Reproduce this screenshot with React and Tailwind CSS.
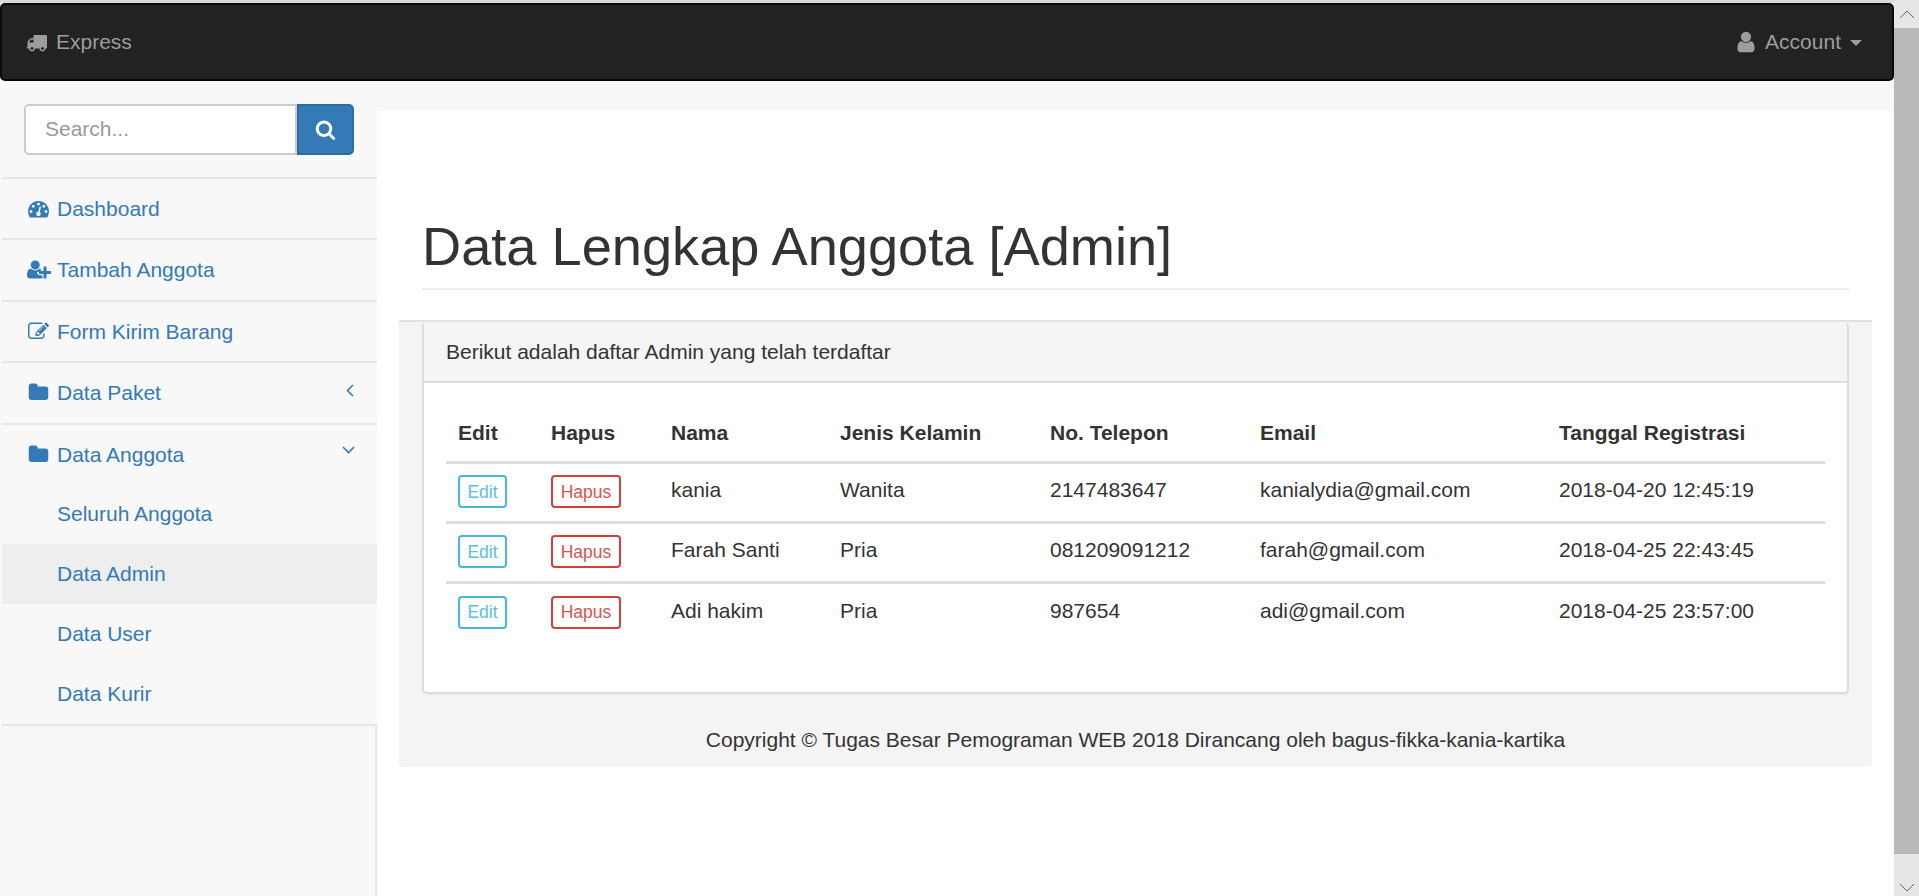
const rows = [
  { nama: "kania", jk: "Wanita", telp: "2147483647", email: "kanialydia@gmail.com", tgl: "2018-04-20 12:45:19" },
  { nama: "Farah Santi", jk: "Pria", telp: "081209091212", email: "farah@gmail.com", tgl: "2018-04-25 22:43:45" },
  { nama: "Adi hakim", jk: "Pria", telp: "987654", email: "adi@gmail.com", tgl: "2018-04-25 23:57:00" },
];

const headers = [
  ["Edit", "w-[93px]"],
  ["Hapus", "w-[120px]"],
  ["Nama", "w-[169px]"],
  ["Jenis Kelamin", "w-[210px]"],
  ["No. Telepon", "w-[210px]"],
  ["Email", "w-[299px]"],
  ["Tanggal Registrasi", ""],
];

// font awesome 4 glyphs
const glyphs = {
  truck: "M640 1408q0-52-38-90t-90-38-90 38-38 90 38 90 90 38 90-38 38-90zm-384-512h384v-256h-158q-13 0-22 9l-195 195q-9 9-9 22v30zm1280 512q0-52-38-90t-90-38-90 38-38 90 38 90 90 38 90-38 38-90zm256-1088v1024q0 15-4 26.5t-13.5 18.5-16.5 11.5-23.5 6-22.5 2-25.5 0-22.5-.5q0 106-75 181t-181 75-181-75-75-181h-384q0 106-75 181t-181 75-181-75-75-181h-64q-3 0-22.5.5t-25.5 0-22.5-2-23.5-6-16.5-11.5-13.5-18.5-4-26.5q0-26 19-45t45-19v-320q0-8-.5-35t0-38 2.5-34.5 6.5-37 14-30.5 22.5-30l198-198q19-19 50.5-32t58.5-13h160v-192q0-26 19-45t45-19h1024q26 0 45 19t19 45z",
  user: "M1536 1399q0 109-62.5 187t-150.5 78h-854q-88 0-150.5-78t-62.5-187q0-85 8.5-160.5t31.5-152 58.5-131 94-89 134.5-34.5q131 128 313 128t313-128q76 0 134.5 34.5t94 89 58.5 131 31.5 152 8.5 160.5zm-256-887q0 159-112.5 271.5t-271.5 112.5-271.5-112.5-112.5-271.5 112.5-271.5 271.5-112.5 271.5 112.5 112.5 271.5z",
  search: "M1216 832q0-185-131.5-316.5t-316.5-131.5-316.5 131.5-131.5 316.5 131.5 316.5 316.5 131.5 316.5-131.5 131.5-316.5zm512 832q0 52-38 90t-90 38q-54 0-90-38l-343-342q-179 124-399 124-143 0-273.5-55.5t-225-150-150-225-55.5-273.5 55.5-273.5 150-225 225-150 273.5-55.5 273.5 55.5 225 150 150 225 55.5 273.5q0 220-124 399l343 343q37 37 37 90z",
  dashboard: "M384 1152q0-53-37.5-90.5t-90.5-37.5-90.5 37.5-37.5 90.5 37.5 90.5 90.5 37.5 90.5-37.5 37.5-90.5zm192-448q0-53-37.5-90.5t-90.5-37.5-90.5 37.5-37.5 90.5 37.5 90.5 90.5 37.5 90.5-37.5 37.5-90.5zm428 481l101-382q6-26-7.5-48.5t-38.5-29.5-48 6.5-30 39.5l-101 382q-60 5-107 43.5t-63 98.5q-20 77 20 146t117 89 146-20 89-117q16-60-6-117t-72-91zm660-33q0-53-37.5-90.5t-90.5-37.5-90.5 37.5-37.5 90.5 37.5 90.5 90.5 37.5 90.5-37.5 37.5-90.5zm-640-640q0-53-37.5-90.5t-90.5-37.5-90.5 37.5-37.5 90.5 37.5 90.5 90.5 37.5 90.5-37.5 37.5-90.5zm448 192q0-53-37.5-90.5t-90.5-37.5-90.5 37.5-37.5 90.5 37.5 90.5 90.5 37.5 90.5-37.5 37.5-90.5zm320 448q0 261-141 483-19 29-54 29h-1402q-35 0-54-29-141-221-141-483 0-182 71-348t191-286 286-191 348-71 348 71 286 191 191 286 71 348z",
  userPlus: "M704 896q-159 0-271.5-112.5t-112.5-271.5 112.5-271.5 271.5-112.5 271.5 112.5 112.5 271.5-112.5 271.5-271.5 112.5zm960 128h352q13 0 22.5 9.5t9.5 22.5v192q0 13-9.5 22.5t-22.5 9.5h-352v352q0 13-9.5 22.5t-22.5 9.5h-192q-13 0-22.5-9.5t-9.5-22.5v-352h-352q-13 0-22.5-9.5t-9.5-22.5v-192q0-13 9.5-22.5t22.5-9.5h352v-352q0-13 9.5-22.5t22.5-9.5h192q13 0 22.5 9.5t9.5 22.5v352zm-736 224q0 52 38 90t90 38h256v238q-68 50-171 50h-874q-121 0-194-69t-73-190q0-53 3.5-103.5t14-109 26.5-108.5 43-97.5 62-81 85.5-53.5 111.5-20q19 0 39 17 79 61 154.5 91.5t164.5 30.5 164.5-30.5 154.5-91.5q20-17 39-17 65 0 121 30v226h-224q-52 0-90 38t-38 90z",
  edit: "M888 1184l116-116-152-152-116 116v56h96v96h56zm440-720q-16-16-33 1l-350 350q-17 17-1 33t33-1l350-350q17-17 1-33zm80 594v190q0 119-84.5 203.5t-203.5 84.5h-832q-119 0-203.5-84.5t-84.5-203.5v-832q0-119 84.5-203.5t203.5-84.5h832q63 0 117 25 15 7 18 23 3 17-9 29l-49 49q-14 14-32 8-23-6-45-6h-832q-66 0-113 47t-47 113v832q0 66 47 113t113 47h832q66 0 113-47t47-113v-126q0-13 9-22l64-64q15-15 35-7t20 29zm-96-738l288 288-672 672h-288v-288zm444 132l-92 92-288-288 92-92q28-28 68-28t68 28l152 152q28 28 28 68t-28 68z",
  folder: "M1728 608v704q0 92-66 158t-158 66h-1216q-92 0-158-66t-66-158v-960q0-92 66-158t158-66h320q92 0 158 66t66 158v32h672q92 0 158 66t66 158z",
};

function Icon({ name, box = 1792, className = "h-[21px] w-[21px]" }) {
  return (
    <svg viewBox={`0 0 ${box} 1792`} fill="currentColor" className={`shrink-0 ${className}`}>
      <path d={glyphs[name]} />
    </svg>
  );
}

function SideItem({ icon, label, right, active, sub, last }) {
  let size = "h-[61.5px] border-b-2 border-[#e7e7e7] pl-[23px]";
  if (sub) size = "h-[60px] pl-[55px]";
  if (last) size = "h-[59.5px] pl-[23px]";
  return (
    <a className={`flex items-center text-[#337ab7] ${size} ${active ? "bg-[#eeeeee]" : ""}`}>
      {icon && <span className="mr-[5px] flex w-[27px] justify-center">{icon}</span>}
      <span className="flex-1">{label}</span>
      {right}
    </a>
  );
}

export default function App() {
  return (
    <div className="flex h-[896px] overflow-hidden bg-white font-['Liberation_Sans',Arial,sans-serif] text-[21px] text-[#333333]">
      <div className="flex min-w-0 flex-1 flex-col">
        <div className="h-[3px] bg-[#d9d9d9]" />
        <nav className="flex h-[78px] shrink-0 items-center justify-between rounded-[5px] border-2 border-[#080808] bg-[#222222] pl-[24px] pr-[30px] text-[#9d9d9d]">
          <div className="flex items-center gap-[9px]">
            <Icon name="truck" />
            <span>Express</span>
          </div>
          <div className="flex items-center">
            <Icon name="user" className="mr-[7px] h-[24px] w-[24px]" />
            <span>Account</span>
            <svg width="12" height="6" viewBox="0 0 12 6" fill="currentColor" className="ml-[9px] mt-[2px]"><path d="M0 0h12L6 6z" /></svg>
          </div>
        </nav>

        <div className="flex min-h-0 flex-1 bg-[#f8f8f8]">
          <aside className="flex w-[377px] shrink-0 flex-col pl-[2px]">
            <div className="border-b-2 border-[#e7e7e7] pb-[21.5px] pl-[22px] pr-[23px] pt-[23px]">
              <div className="flex h-[51px]">
                <input
                  placeholder="Search..."
                  className="h-full min-w-0 flex-1 rounded-l-[5px] border-2 border-[#cccccc] bg-white px-[19px] pb-[2px] text-[21px] outline-none placeholder:text-[#999999]"
                />
                <button className="flex w-[57px] items-center justify-center rounded-r-[5px] border-2 border-[#2e6da4] bg-[#337ab7] text-white">
                  <Icon name="search" />
                </button>
              </div>
            </div>
            <SideItem icon={<Icon name="dashboard" />} label="Dashboard" />
            <SideItem icon={<Icon name="userPlus" box={2048} className="h-[21px] w-[24px]" />} label="Tambah Anggota" />
            <SideItem icon={<Icon name="edit" />} label="Form Kirim Barang" />
            <SideItem
              icon={<Icon name="folder" />}
              label="Data Paket"
              right={<svg width="8" height="13" viewBox="0 0 8 13" fill="none" stroke="currentColor" strokeWidth="1.6" className="mb-[5px] mr-[23px]"><path d="M7 1L1.5 6.5 7 12" /></svg>}
            />
            <SideItem
              last
              icon={<Icon name="folder" />}
              label="Data Anggota"
              right={<svg width="13" height="8" viewBox="0 0 13 8" fill="none" stroke="currentColor" strokeWidth="1.6" className="mb-[8px] mr-[22px]"><path d="M1 1l5.5 5.5L12 1" /></svg>}
            />
            <div className="border-b-2 border-[#e7e7e7]">
              <SideItem sub label="Seluruh Anggota" />
              <SideItem sub active label="Data Admin" />
              <SideItem sub label="Data User" />
              <SideItem sub label="Data Kurir" />
            </div>
            <div className="flex-1 border-r-2 border-[#e7e7e7]" />
          </aside>

          <main className="mt-[30px] min-w-0 flex-1 bg-white">
            <div className="mx-[45px] border-b-2 border-[#eeeeee] pb-[12px] pt-[106px]">
              <h1 className="text-[54.2px] leading-[59px] text-[#333333]">Data Lengkap Anggota [Admin]</h1>
            </div>
            <div className="mx-[22px] mt-[30px] h-[447px] rounded-b-[4px] border-t-2 border-[#e0e0e0] bg-[#f4f4f4] px-[23px]">
              <section className="h-[372px] rounded-[5px] border-2 border-t-0 border-[#dddddd] bg-white shadow-[0_1px_1px_rgba(0,0,0,0.05)]">
                <div className="flex h-[61px] items-center border-b-2 border-[#dddddd] bg-[#f5f5f5] px-[22px]">
                  Berikut adalah daftar Admin yang telah terdaftar
                </div>
                <div className="px-[22px] pt-[19px]">
                  <table className="w-full table-fixed border-collapse text-left">
                    <thead>
                      <tr className="h-[60px] border-b-[3px] border-[#dddddd]">
                        {headers.map(([h, w]) => (
                          <th key={h} className={`${w} px-[12px] pt-[2px] font-bold`}>{h}</th>
                        ))}
                      </tr>
                    </thead>
                    <tbody>
                      {rows.map((r, i) => (
                        <tr key={r.telp} className={`h-[60px] ${i < 2 ? "border-b-[3px] border-[#dddddd]" : ""}`}>
                          <td className="px-[12px] pb-[1px]">
                            <span className="inline-flex h-[33px] w-[49px] items-center justify-center rounded-[4px] border-2 border-[#46b8da] text-[17.5px] text-[#5bc0de]">Edit</span>
                          </td>
                          <td className="px-[12px] pb-[1px]">
                            <span className="inline-flex h-[33px] w-[70px] items-center justify-center rounded-[4px] border-2 border-[#d43f3a] text-[17.5px] text-[#d9534f]">Hapus</span>
                          </td>
                          <td className="px-[12px] pb-[4px]">{r.nama}</td>
                          <td className="px-[12px] pb-[4px]">{r.jk}</td>
                          <td className="px-[12px] pb-[4px]">{r.telp}</td>
                          <td className="px-[12px] pb-[4px]">{r.email}</td>
                          <td className="px-[12px] pb-[4px]">{r.tgl}</td>
                        </tr>
                      ))}
                    </tbody>
                  </table>
                </div>
              </section>
              <p className="pt-[30px] text-center">Copyright © Tugas Besar Pemograman WEB 2018 Dirancang oleh bagus-fikka-kania-kartika</p>
            </div>
          </main>
        </div>
      </div>

      <div className="flex w-[25px] shrink-0 flex-col bg-[#e6e6e6]">
        <div className="flex h-[28px] items-center justify-center">
          <svg width="16" height="9" viewBox="0 0 16 9" fill="none" stroke="#666666"><path d="M1 8l7-7 7 7" /></svg>
        </div>
        <div className="flex-1 bg-[#b9b9b9]" />
        <div className="flex h-[42px] items-end justify-center pb-[4px]">
          <svg width="16" height="9" viewBox="0 0 16 9" fill="none" stroke="#666666"><path d="M1 1l7 7 7-7" /></svg>
        </div>
      </div>
    </div>
  );
}
